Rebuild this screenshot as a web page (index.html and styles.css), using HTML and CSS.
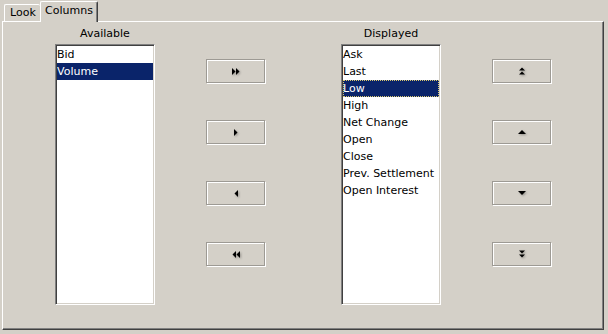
FILE: index.html
```html
<!DOCTYPE html>
<html lang="en">
<head>
    <meta charset="UTF-8">
    <title>Columns</title>
    <link rel="stylesheet" href="styles.css">
</head>
<body>
    <div class="tabs">
        <div class="tab look">Look</div>
        <div class="tab active">Columns</div>
    </div>
    <div class="panel">
        <div class="group">
            <div class="caption">Available</div>
            <ul class="list">
                <li>Bid</li>
                <li class="selected">Volume</li>
            </ul>
        </div>

        <div class="buttons move">
            <button type="button" title="Add all">
                <svg width="8" height="7" viewBox="0 0 8 7"><polygon points="0,0 3.5,3.5 0,7"/><polygon points="4,0 7.5,3.5 4,7"/></svg>
            </button>
            <button type="button" title="Add">
                <svg width="4" height="7" viewBox="0 0 4 7"><polygon points="0,0 3.5,3.5 0,7"/></svg>
            </button>
            <button type="button" title="Remove">
                <svg width="4" height="7" viewBox="0 0 4 7"><polygon points="4,0 0.5,3.5 4,7"/></svg>
            </button>
            <button type="button" title="Remove all">
                <svg width="8" height="7" viewBox="0 0 8 7"><polygon points="4,0 0.5,3.5 4,7"/><polygon points="8,0 4.5,3.5 8,7"/></svg>
            </button>
        </div>

        <div class="group">
            <div class="caption">Displayed</div>
            <ul class="list">
                <li>Ask</li>
                <li>Last</li>
                <li class="selected focused">Low</li>
                <li>High</li>
                <li>Net Change</li>
                <li>Open</li>
                <li>Close</li>
                <li>Prev. Settlement</li>
                <li>Open Interest</li>
            </ul>
        </div>

        <div class="buttons">
            <button type="button" title="Move to top">
                <svg width="6" height="8" viewBox="0 0 6 8"><polygon points="0,3.5 3,0.5 6,3.5"/><polygon points="0,7.5 3,4.5 6,7.5"/></svg>
            </button>
            <button type="button" title="Move up">
                <svg width="8" height="4" viewBox="0 0 8 4"><polygon points="0,4 4,0 8,4"/></svg>
            </button>
            <button type="button" title="Move down">
                <svg width="8" height="4" viewBox="0 0 8 4"><polygon points="0,0 8,0 4,4"/></svg>
            </button>
            <button type="button" title="Move to bottom">
                <svg width="6" height="8" viewBox="0 0 6 8"><polygon points="0,0.5 6,0.5 3,3.5"/><polygon points="0,4.5 6,4.5 3,7.5"/></svg>
            </button>
        </div>
    </div>
</body>
</html>
```

FILE: styles.css
```css
body {
    margin: 0;
    width: 608px;
    height: 334px;
    background-color: #d4d0c8;
    font-family: "DejaVu Sans", sans-serif;
    font-size: 11px;
    color: #000000;
}
.tabs {
    display: flex;
    align-items: flex-end;
    height: 21px;
    padding-left: 4px;
}
.tab {
    box-sizing: border-box;
    height: 17px;
    line-height: 16px;
    padding-left: 5px;
    white-space: nowrap;
    border-top: 1px solid #ffffff;
    border-left: 1px solid #ffffff;
    border-radius: 2px 2px 0 0;
    background-color: #d4d0c8;
}
.tab.look {
    width: 36px;
}
.tab.active {
    position: relative;
    z-index: 1;
    width: 58px;
    height: 21px;
    margin-bottom: -1px;
    padding-top: 1px;
    padding-left: 4px;
    border-right: 1px solid #404040;
    box-shadow: inset -1px 0 #808080;
}
.panel {
    box-sizing: border-box;
    display: flex;
    gap: 51px;
    width: 602px;
    height: 309px;
    margin-left: 2px;
    padding: 5px 0 0 52px;
    border: 1px solid;
    border-color: #ffffff #404040 #404040 #ffffff;
    box-shadow: inset -1px -1px #808080;
}
.group {
    width: 100px;
}
.caption {
    height: 13px;
    line-height: 13px;
    margin-bottom: 4px;
    text-align: center;
}
.list {
    box-sizing: border-box;
    height: 261px;
    margin: 0;
    padding: 1px;
    list-style: none;
    background-color: #ffffff;
    border: 1px solid;
    border-color: #808080 #ffffff #ffffff #808080;
    box-shadow: inset 1px 1px #404040, inset -1px -1px #d4d0c8;
}
.list li {
    height: 17px;
    line-height: 17px;
    white-space: nowrap;
    overflow: hidden;
}
.list li.selected {
    background-color: #0a246a;
    color: #ffffff;
}
.list li.focused {
    outline: 1px dotted #d8c870;
    outline-offset: -1px;
}
.buttons {
    display: flex;
    flex-direction: column;
    gap: 37px;
    width: 59px;
    padding-top: 32px;
}
.buttons.move {
    margin-right: 25px;
}
.buttons button {
    box-sizing: border-box;
    display: flex;
    align-items: center;
    justify-content: center;
    width: 59px;
    height: 24px;
    padding: 0;
    background-color: #d4d0c8;
    border: 1px solid #9d9a94;
    box-shadow: inset 1px 1px #ffffff, 1px 1px #ffffff;
}
.buttons svg {
    fill: #000000;
    filter: drop-shadow(1px 1px 1px rgba(0, 0, 0, 0.3));
}
```
